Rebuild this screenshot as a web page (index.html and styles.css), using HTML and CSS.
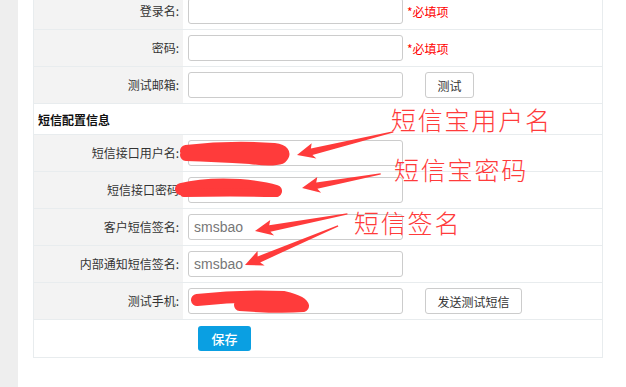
FILE: index.html
```html
<!DOCTYPE html>
<html lang="zh-CN">
<head>
    <meta charset="UTF-8">
    <meta name="viewport" content="width=device-width, initial-scale=1.0">
    <title>短信配置</title>
    <link rel="stylesheet" href="styles.css">
</head>
<body>

<div class="page">
    <div class="sidebar"></div>

    <div class="main">
        <div class="form-table">
            <!-- 基本信息 -->
            <div class="row">
                <div class="label">登录名:</div>
                <div class="value"><input class="field" type="text"><span class="required">*必填项</span></div>
            </div>
            <div class="row">
                <div class="label">密码:</div>
                <div class="value"><input class="field" type="password"><span class="required">*必填项</span></div>
            </div>
            <div class="row">
                <div class="label">测试邮箱:</div>
                <div class="value"><input class="field" type="text"><button class="btn" type="button">测试</button></div>
            </div>

            <!-- 短信配置 -->
            <div class="row row--title">短信配置信息</div>
            <div class="row">
                <div class="label">短信接口用户名:</div>
                <div class="value"><input class="field" type="text"></div>
            </div>
            <div class="row">
                <div class="label">短信接口密码</div>
                <div class="value"><input class="field" type="text"></div>
            </div>
            <div class="row">
                <div class="label">客户短信签名:</div>
                <div class="value"><input class="field" type="text" value="smsbao"></div>
            </div>
            <div class="row">
                <div class="label">内部通知短信签名:</div>
                <div class="value"><input class="field" type="text" value="smsbao"></div>
            </div>
            <div class="row">
                <div class="label">测试手机:</div>
                <div class="value"><input class="field" type="text"><button class="btn btn--wide" type="button">发送测试短信</button></div>
            </div>
            <div class="row row--save">
                <button class="btn-save" type="button">保存</button>
            </div>
        </div>
    </div>
</div>

<!-- 标注层 -->
<svg class="marks" width="626" height="387" viewBox="0 0 626 387">
    <g fill="none" stroke="#ff3b3b" stroke-linecap="round" stroke-linejoin="round">
        <path d="M186,151 Q230,146 274,149 Q288,151 281,158 Q272,161 250,158 Q215,156 186,155" stroke-width="12"/>
        <path d="M181,189 Q205,183 240,185 Q262,187 276,191" stroke-width="12"/>
        <path d="M184,193 Q230,192 276,193" stroke-width="8"/>
        <path d="M197,300 Q240,295 284,297 Q302,301 303,306 Q280,308 240,305" stroke-width="12"/>
    </g>
    <g fill="#ff3b3b">
        <polygon transform="translate(297,155) rotate(-13.5)" points="0,0 17,-8 15,-3 99,-0.6 99,0.6 15,3.5 18,8"/>
        <polygon transform="translate(302,188) rotate(-10.2)" points="0,0 17,-8 15,-3 80,-0.6 80,0.6 15,3.5 18,8"/>
        <polygon transform="translate(255,231) rotate(-10.5)" points="0,0 17,-8 15,-3 94,-0.6 94,0.6 15,3.5 18,8"/>
        <polygon transform="translate(245,265) rotate(-22.8)" points="0,0 17,-8 15,-3 101,-0.6 101,0.6 15,3.5 18,8"/>
    </g>
</svg>
<div class="note note--user">短信宝用户名</div>
<div class="note note--pass">短信宝密码</div>
<div class="note note--sign">短信签名</div>

</body>
</html>
```

FILE: styles.css
```css
/* base */
body { margin: 0; background: #fff; font-family: "Noto Sans CJK SC", "Noto Sans", sans-serif; font-size: 12px; color: #333; overflow: hidden; }
.page { display: flex; height: 387px; }
.sidebar { width: 18px; background: #eeeeee; flex: none; }
.main { flex: 1; padding-left: 15px; }

/* form table */
.form-table { width: 568px; border: 1px solid #e8ecee; border-top: none; margin-top: -7px; }
.row { display: flex; height: 36px; border-bottom: 1px solid #e8ecee; }
.label { width: 145px; padding-right: 4px; background: #f3f3f3; text-align: right; line-height: 36px; white-space: nowrap; }
.value { flex: 1; display: flex; align-items: center; padding-left: 5px; }
.field { box-sizing: border-box; width: 215px; height: 26px; border: 1px solid #cccccc; border-radius: 3px; padding: 0 5px; font-family: "Liberation Sans", Arial, sans-serif; font-size: 14px; color: #777; }
.required { margin-left: 4px; color: #ff0000; }
.btn { box-sizing: border-box; margin-left: 22px; width: 49px; height: 26px; border: 1px solid #cccccc; border-radius: 3px; background: #fff; font-family: inherit; font-size: 12px; color: #333; padding: 0; }
.btn--wide { width: 97px; }
.row--title { height: 30px; align-items: center; padding-left: 4px; font-weight: bold; font-size: 12px; color: #111; }
.row--save { align-items: center; padding-left: 164px; border-bottom: none; height: 37px; }
.btn-save { width: 53px; height: 25px; border: none; border-radius: 3px; background: #0a9fe2; color: #fff; font-family: inherit; font-size: 13px; font-weight: 500; padding: 0; }

/* annotations */
.marks { position: absolute; top: 0; left: 0; pointer-events: none; }
.note { position: absolute; font-size: 25px; font-weight: 300; line-height: 1; letter-spacing: 1.8px; color: #ff3b3b; white-space: nowrap; }
.note--user { left: 391px; top: 107px; }
.note--pass { left: 394px; top: 157px; }
.note--sign { left: 354px; top: 210px; }
```
